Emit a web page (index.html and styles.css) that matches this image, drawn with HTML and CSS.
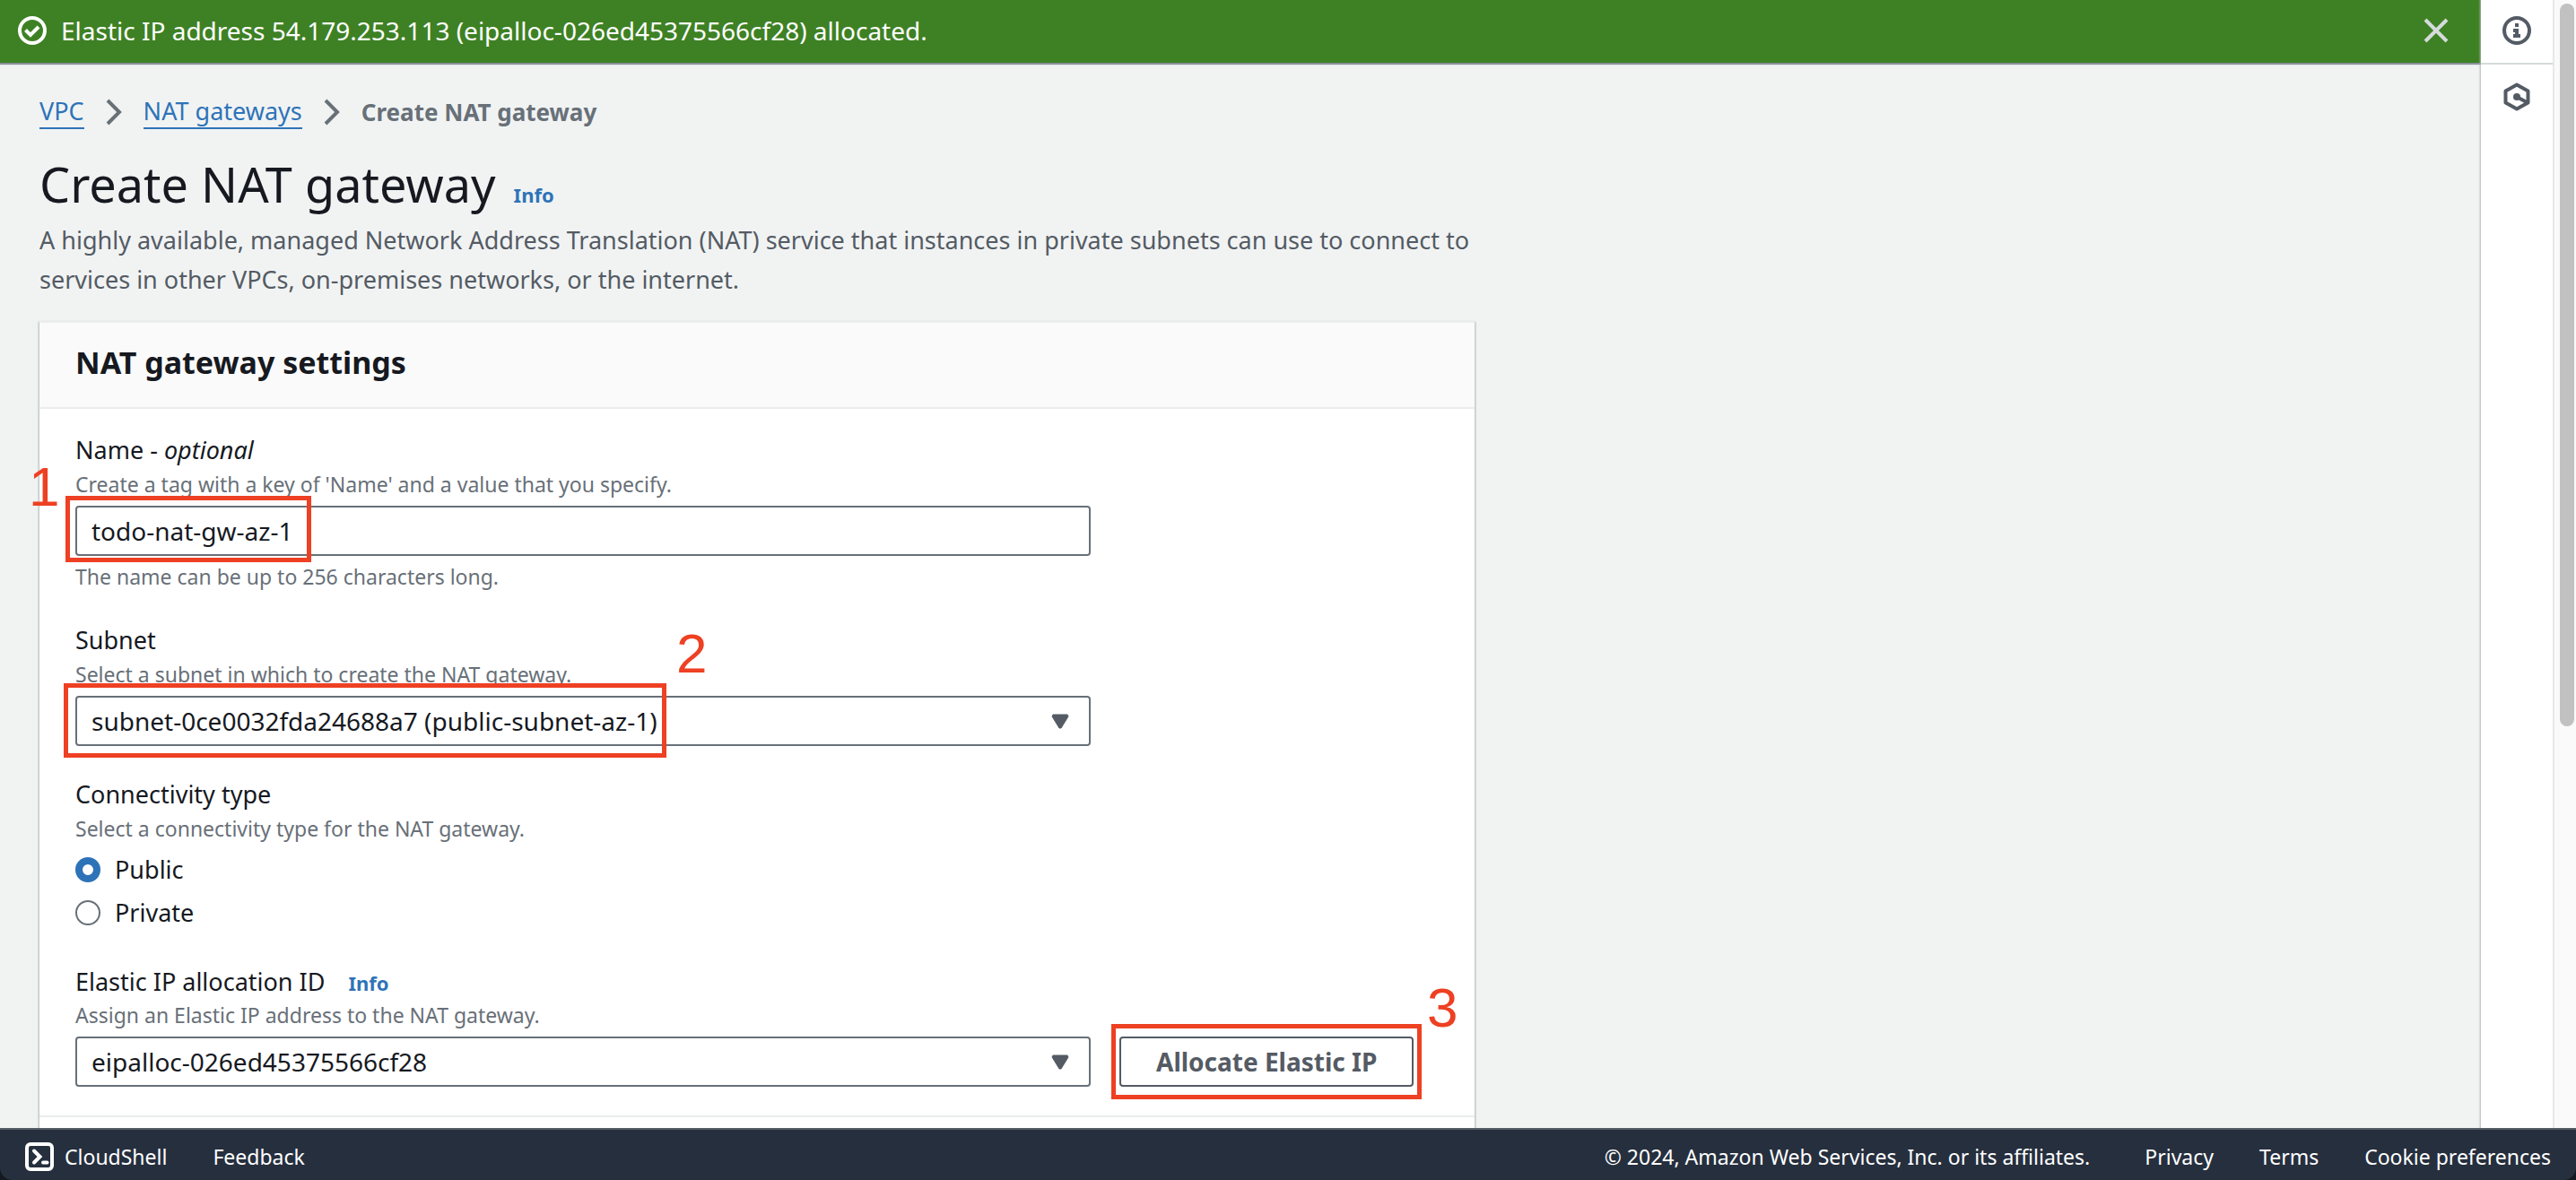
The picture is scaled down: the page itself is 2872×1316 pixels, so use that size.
FILE: index.html
```html
<!DOCTYPE html>
<html lang="en">
<head>
  <meta charset="utf-8">
  <meta name="viewport" content="width=device-width, initial-scale=1">
  <title>Create NAT gateway | VPC Console</title>
  <link rel="stylesheet" href="styles.css">
</head>
<body>
  <div class="app">
    <div class="workspace">
      <div class="page">
        <div class="flash" role="status">
          <svg class="icon" viewBox="0 0 32 32" aria-hidden="true">
            <circle cx="16" cy="16" r="14" fill="none" stroke="#fff" stroke-width="4"/>
            <path d="M8.500 15.500l5.500 5.500 9-9" fill="none" stroke="#fff" stroke-width="4"/>
          </svg>
          <span class="flash-text">Elastic IP address 54.179.253.113 (eipalloc-026ed45375566cf28) allocated.</span>
          <button class="flash-close" type="button" aria-label="Dismiss">
            <svg viewBox="0 0 28 28" aria-hidden="true">
              <path d="M2 2l24 24M26 2L2 26" fill="none" stroke="#d5dbdb" stroke-width="4"/>
            </svg>
          </button>
        </div>

        <main class="content">
          <nav class="breadcrumbs" aria-label="Breadcrumbs">
            <a class="crumb" href="#vpc">VPC</a>
            <svg class="chevron" viewBox="0 0 18 30" aria-hidden="true"><path d="M2 2l13 13L2 28" fill="none" stroke="#687078" stroke-width="4"/></svg>
            <a class="crumb" href="#nat">NAT gateways</a>
            <svg class="chevron" viewBox="0 0 18 30" aria-hidden="true"><path d="M2 2l13 13L2 28" fill="none" stroke="#687078" stroke-width="4"/></svg>
            <span class="crumb-current" aria-current="page">Create NAT gateway</span>
          </nav>

          <header class="page-header">
            <div class="title-row">
              <h1>Create NAT gateway</h1>
              <a class="info" href="#info">Info</a>
            </div>
            <p class="lead">A highly available, managed Network Address Translation (NAT) service that instances in private subnets can use to connect to services in other VPCs, on-premises networks, or the internet.</p>
          </header>

          <form class="panel">
            <div class="panel-header"><h2>NAT gateway settings</h2></div>
            <div class="panel-body">
              <div class="field">
                <label class="label" for="name">Name - <i>optional</i></label>
                <p class="hint" id="name-hint">Create a tag with a key of 'Name' and a value that you specify.</p>
                <div class="control">
                  <input class="input" id="name" type="text" value="todo-nat-gw-az-1" aria-describedby="name-hint">
                  <span class="mark mark-name"></span>
                  <span class="step step-1">1</span>
                </div>
                <p class="constraint">The name can be up to 256 characters long.</p>
              </div>

              <div class="field">
                <label class="label" for="subnet">Subnet</label>
                <p class="hint">Select a subnet in which to create the NAT gateway.</p>
                <div class="control">
                  <select class="input" id="subnet">
                    <option>subnet-0ce0032fda24688a7 (public-subnet-az-1)</option>
                  </select>
                  <svg class="caret" viewBox="0 0 20 17" aria-hidden="true"><path d="M2 1h16l1 2-8 13h-2L1 3z" fill="#545b64" stroke="#545b64" stroke-linejoin="round"/></svg>
                  <span class="mark mark-subnet"></span>
                  <span class="step step-2">2</span>
                </div>
              </div>

              <fieldset class="field">
                <legend class="label">Connectivity type</legend>
                <p class="hint">Select a connectivity type for the NAT gateway.</p>
                <div class="radios">
                  <label class="radio"><input type="radio" name="connectivity" checked>Public</label>
                  <label class="radio"><input type="radio" name="connectivity">Private</label>
                </div>
              </fieldset>

              <div class="field">
                <div class="label-row">
                  <label class="label" for="eip">Elastic IP allocation ID</label>
                  <a class="info" href="#eip-info">Info</a>
                </div>
                <p class="hint">Assign an Elastic IP address to the NAT gateway.</p>
                <div class="control-row">
                  <div class="control">
                    <select class="input" id="eip">
                      <option>eipalloc-026ed45375566cf28</option>
                    </select>
                    <svg class="caret" viewBox="0 0 20 17" aria-hidden="true"><path d="M2 1h16l1 2-8 13h-2L1 3z" fill="#545b64" stroke="#545b64" stroke-linejoin="round"/></svg>
                  </div>
                  <div class="action">
                    <button class="button" type="button">Allocate Elastic IP</button>
                    <span class="mark mark-allocate"></span>
                    <span class="step step-3">3</span>
                  </div>
                </div>
              </div>
            </div>
            <div class="panel-footer"></div>
          </form>
        </main>
      </div>

      <aside class="rail" aria-label="Help panels">
        <button class="rail-button rail-info" type="button" aria-label="Info">
          <svg class="icon" viewBox="0 0 32 32" aria-hidden="true">
            <circle cx="16" cy="16" r="14" fill="none" stroke="#545b64" stroke-width="4"/>
            <path d="M14 8h4v4h-4zM12 14h6v6h2v4h-8v-4h2v-2h-2z" fill="#545b64"/>
          </svg>
        </button>
        <button class="rail-button" type="button" aria-label="Tutorials">
          <svg class="icon" viewBox="0 0 32 32" aria-hidden="true">
            <path d="M16 2.500l12.500 7v13L16 29.500 3.500 22.500v-13z" fill="none" stroke="#545b64" stroke-width="4" stroke-linejoin="round"/>
            <circle cx="16" cy="16" r="4" fill="#545b64"/>
            <path d="M16 16l11 6" stroke="#545b64" stroke-width="4"/>
          </svg>
        </button>
      </aside>
      <div class="scrollbar" aria-hidden="true"><div class="thumb"></div></div>
    </div>

    <footer class="footer">
      <a class="cloudshell" href="#cloudshell">
        <svg class="icon" viewBox="0 0 32 32" aria-hidden="true">
          <rect x="2" y="2" width="28" height="28" rx="4" fill="none" stroke="#fff" stroke-width="4"/>
          <path d="M10 9.500l6.500 6.500-6.500 6.500" fill="none" stroke="#fff" stroke-width="4" stroke-linecap="round"/>
          <path d="M20 22.500h4.500" stroke="#fff" stroke-width="4" stroke-linecap="round"/>
        </svg>
        CloudShell
      </a>
      <a href="#feedback">Feedback</a>
      <span class="copyright">© 2024, Amazon Web Services, Inc. or its affiliates.</span>
      <a href="#privacy">Privacy</a>
      <a href="#terms">Terms</a>
      <a href="#cookies">Cookie preferences</a>
    </footer>
  </div>
</body>
</html>
```
FILE: styles.css
```css
* {
  box-sizing: border-box;
}

body {
  margin: 0;
  background: #16191f;
  color: #16191f;
  font: 27px/44px "Noto Sans", "Open Sans", sans-serif;
}

h1, h2, p {
  margin: 0;
}

a {
  color: #2e73b8;
  text-decoration: none;
}

button, input, select {
  font: inherit;
  color: inherit;
}

.app {
  height: 100vh;
  display: grid;
  grid-template-rows: minmax(0, 1fr) auto;
}

.workspace {
  display: grid;
  grid-template-columns: minmax(0, 1fr) 80px 26px;
  overflow: hidden;
  background: #f1f3f3;
}

.page {
  overflow: hidden;
}

.icon {
  display: block;
  flex: none;
  width: 32px;
  height: 32px;
}

/* Notification bar */
.flash {
  display: flex;
  align-items: center;
  height: 70px;
  padding: 0 36px 2px 20px;
  gap: 16px;
  background: #3e8124;
  box-shadow: 0 2px 1px #87919a;
  color: #fff;
}

.flash-text {
  flex: 1;
  font-size: 28px;
}

.flash-close {
  width: 28px;
  height: 28px;
  padding: 0;
  border: 0;
  background: none;
}

.flash-close svg {
  display: block;
}

/* Page heading */
.content {
  padding: 33px 44px 0;
}

.breadcrumbs {
  display: flex;
  align-items: center;
  gap: 24px;
  height: 44px;
}

.crumb {
  border-bottom: 2px solid #2e73b8;
  line-height: 36px;
}

.crumb-current {
  font-size: 26px;
  font-weight: 700;
  color: #687078;
}

.chevron {
  width: 18px;
  height: 30px;
}

.page-header,
.panel {
  max-width: 1600px;
}

.page-header {
  margin-top: 23px;
}

.title-row {
  display: flex;
  align-items: baseline;
  gap: 20px;
}

h1 {
  font-size: 54px;
  font-weight: 400;
  line-height: 70px;
}

.info {
  font-size: 22px;
  font-weight: 700;
}

.lead {
  margin-top: 6px;
  color: #545b64;
}

/* Settings panel */
.panel {
  margin-top: 24px;
  border-top: 2px solid #eaeded;
  background: #fff;
  box-shadow: 0 2px 2px 1px #aab7b8;
}

.panel-header {
  padding: 20px 40px 26px;
  border-bottom: 2px solid #eaeded;
  background: #fafafa;
}

h2 {
  font-size: 34px;
  font-weight: 700;
  line-height: 48px;
}

.panel-body {
  display: grid;
  gap: 34px;
  padding: 26px 40px 32px;
}

.panel-footer {
  height: 80px;
  border-top: 2px solid #eaeded;
}

.field {
  min-width: 0;
  margin: 0;
  padding: 0;
  border: 0;
}

.label {
  display: block;
  padding: 0;
  line-height: 40px;
}

.label-row {
  display: flex;
  align-items: baseline;
  gap: 26px;
  height: 40px;
}

.hint,
.constraint {
  font-size: 23px;
  line-height: 36px;
  color: #687078;
}

.constraint {
  margin-top: 6px;
  line-height: 34px;
}

.control {
  position: relative;
  flex: 1;
  max-width: 1132px;
  margin-top: 6px;
}

.input {
  display: block;
  width: 100%;
  height: 56px;
  padding: 0 16px;
  border: 2px solid #687078;
  border-radius: 4px;
  background: #fff;
  font-size: 28px;
  appearance: none;
}

.caret {
  position: absolute;
  top: 20px;
  right: 24px;
  width: 20px;
  height: 17px;
  pointer-events: none;
}

.radios {
  display: grid;
  gap: 4px;
  margin-top: 6px;
}

.radio {
  display: flex;
  align-items: center;
  gap: 16px;
}

.radio input {
  width: 28px;
  height: 28px;
  margin: 0;
  border: 2px solid #687078;
  border-radius: 50%;
  background: #fff;
  appearance: none;
}

.radio input:checked {
  border: 8px solid #2e73b8;
}

.control-row {
  display: flex;
  gap: 32px;
}

.action {
  position: relative;
  margin-top: 6px;
}

.button {
  display: block;
  height: 56px;
  padding: 0 39px;
  border: 2px solid #545b64;
  border-radius: 4px;
  background: #fff;
  color: #545b64;
  font-size: 28px;
  font-weight: 700;
}

/* Walkthrough annotations */
.mark {
  position: absolute;
  border: 5px solid #ee4023;
  pointer-events: none;
}

.mark-name {
  top: -11px;
  left: -11px;
  width: 274px;
  height: 74px;
}

.mark-subnet {
  top: -14px;
  left: -13px;
  width: 672px;
  height: 83px;
}

.mark-allocate {
  inset: -14px -9px;
}

.step {
  position: absolute;
  color: #ee4023;
  font: 62px/62px "Liberation Sans", Arial, sans-serif;
}

.step-1 {
  top: -52px;
  left: -52px;
}

.step-2 {
  top: -78px;
  left: 670px;
}

.step-3 {
  top: -63px;
  left: 343px;
}

/* Right-hand rail */
.rail {
  z-index: 1;
  background: #fff;
  box-shadow: 0 0 2px 1px #aab7b8;
}

.rail-button {
  display: flex;
  align-items: center;
  justify-content: center;
  width: 100%;
  height: 72px;
  padding: 0;
  border: 0;
  background: none;
}

.rail-info {
  padding-bottom: 2px;
  border-bottom: 2px solid #d5dbdb;
}

.scrollbar {
  z-index: 2;
  padding: 4px 2px 4px 6px;
  border-left: 2px solid #e8e8e8;
  background: #fafafa;
}

.thumb {
  width: 16px;
  height: 64.5%;
  border-radius: 8px;
  background: #c1c1c1;
}

/* Console footer */
.footer {
  z-index: 3;
  display: flex;
  align-items: center;
  gap: 51px;
  height: 58px;
  padding: 4px 28px 0;
  border-top: 2px solid #545b64;
  border-radius: 0 0 14px 14px;
  background: #262f3e;
  color: #fff;
  font-size: 23px;
}

.footer a {
  color: #fff;
}

.footer .cloudshell {
  display: flex;
  align-items: center;
  gap: 12px;
}

.copyright {
  margin: 0 10px 0 auto;
}
```
